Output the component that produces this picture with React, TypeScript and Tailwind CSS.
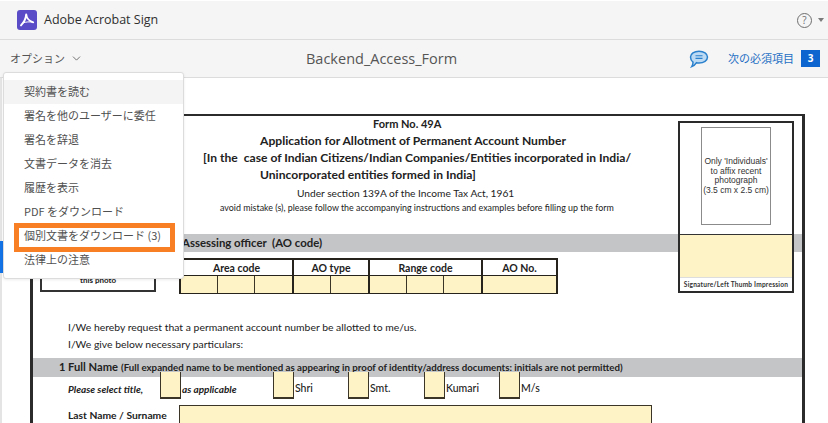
import { ChevronDown } from 'lucide-react';

const menuItems = [
  '契約書を読む',
  '署名を他のユーザーに委任',
  '署名を辞退',
  '文書データを消去',
  '履歴を表示',
  'PDF をダウンロード',
  '個別文書をダウンロード (3)',
  '法律上の注意',
];

const titleBoxes = [
  { label: 'Shri', width: 'w-[75px]' },
  { label: 'Smt.', width: 'w-[76px]' },
  { label: 'Kumari', width: 'w-[75px]' },
  { label: 'M/s', width: 'w-[40px]' },
];

function AcrobatLogo() {
  return (
    <svg width="20" height="20" viewBox="0 0 20 20" className="shrink-0">
      <rect width="20" height="20" rx="3" fill="#5a4bc6" />
      <path
        d="M9.200 4.400C9 7.500 7.200 12 4 15.400M9.200 4.400c.3 3.300 3 6.900 7 7.900"
        fill="none"
        stroke="#fff"
        strokeWidth="1.900"
        strokeLinecap="round"
        strokeLinejoin="round"
      />
      <path d="M6 12.900c3-1.100 6.600-1.400 10.200-.6" fill="none" stroke="#fff" strokeWidth="1" strokeLinecap="round" />
    </svg>
  );
}

function ChatIcon() {
  return (
    <svg width="20" height="18" viewBox="0 0 20 18">
      <path
        d="M10 1.200c4.800 0 8.500 2.500 8.500 5.900S14.800 13 10 13c-.9 0-1.700-.1-2.500-.3C6.300 14.600 4.800 16 2.800 16.600c.8-1.100 1.200-2.400 1.200-4.400C2.400 11 1.500 9.300 1.500 7.100c0-3.400 3.700-5.900 8.500-5.900z"
        fill="#bcdaf3"
        stroke="#2a80cc"
        strokeWidth="1.500"
      />
      <path d="M6.500 5.800h7M6.500 8.400h7" stroke="#2a80cc" strokeWidth="1.100" />
    </svg>
  );
}

function OptionsMenu() {
  return (
    <div className="absolute left-[3px] top-[72px] z-10 h-[207px] w-[181px] rounded-[3px] border border-[#dcdcdc] bg-white py-[7px] shadow-[0_1px_3px_rgba(0,0,0,0.08)]">
      {menuItems.map((item, i) => (
        <div
          key={item}
          className={`h-[24px] pl-[20px] text-[11px] leading-[23px] text-[#505050] ${i === 0 ? 'bg-[#f4f4f4]' : ''}`}
        >
          {item}
        </div>
      ))}
      <div className="absolute left-[10px] top-[150px] h-[29px] w-[161px] border-[5px] border-[#f97f25]" />
    </div>
  );
}

function CodeCells({ count, widthClass }: { count: number; widthClass: string }) {
  return (
    <div className="flex h-[17px] bg-[#fdf3c6]">
      {Array.from({ length: count }, (_, i) => (
        <div key={i} className={`${widthClass} h-full border-r border-[#3a3526] last:border-r-0`} />
      ))}
    </div>
  );
}

function CodeColumn({ label, count, widthClass, boxClass }: { label: string; count: number; widthClass: string; boxClass: string }) {
  return (
    <div className={`${boxClass} border-r-2 border-[#26231c] last:border-r-0`}>
      <div className="h-[16px] border-b border-[#26231c] text-center text-[10.500px] font-bold leading-[16px] text-[#222]">{label}</div>
      <CodeCells count={count} widthClass={widthClass} />
    </div>
  );
}

function PhotoPanel() {
  return (
    <div className="absolute left-[645px] top-[5px] z-[1] flex h-[172px] w-[116px] flex-col border-2 border-[#2a2a2a] bg-white">
      <div className="h-[111px] pt-[4px]">
        <div className="mx-auto flex h-[98px] w-[70px] items-center justify-center border border-[#8b8b8b] text-center font-['Liberation_Sans',sans-serif] text-[8.500px] leading-[9.500px] text-[#333]">
          <span>
            Only 'Individuals'
            <br />
            to affix recent
            <br />
            photograph
            <br />
            (3.5 cm x 2.5 cm)
          </span>
        </div>
      </div>
      <div className="h-[43px] border-t border-[#333] bg-[#fdf3c6]" />
      <div className="flex-1 border-t border-[#dddddd] text-center text-[6.600px] font-bold leading-[13px] tracking-[0.200px] text-[#333]">
        Signature/Left Thumb Impression
      </div>
    </div>
  );
}

export default function App() {
  return (
    <div className="relative h-[423px] w-[828px] overflow-hidden bg-white font-['Noto_Sans_CJK_JP',sans-serif]">
      <header className="mt-px flex h-[39px] items-center border-b border-[#dcdcdc] bg-[#f5f5f5] pl-[17px] pr-[4px]">
        <AcrobatLogo />
        <span className="ml-[7px] font-['Open_Sans',sans-serif] text-[12.500px] text-[#2f2f2f]">Adobe Acrobat Sign</span>
        <div className="ml-auto flex items-center gap-[6px]">
          <div className="flex h-[15px] w-[15px] items-center justify-center rounded-full border-[1.500px] border-[#6e6e6e] font-['Open_Sans',sans-serif] text-[10px] leading-none text-[#6e6e6e]">?</div>
          <div className="h-0 w-0 border-x-[3.500px] border-t-[4px] border-x-transparent border-t-[#7a7a7a]" />
        </div>
      </header>

      <div className="flex h-[38px] items-center border-b border-[#dcdcdc] bg-[#f5f5f5] pl-[10px] pr-[8px]">
        <span className="text-[11px] text-[#555]">オプション</span>
        <ChevronDown size={13} strokeWidth={1.700} className="ml-[5px] text-[#666]" />
        <span className="ml-[223px] font-['Open_Sans',sans-serif] text-[14.500px] text-[#555]">Backend_Access_Form</span>
        <div className="ml-auto flex items-center">
          <ChatIcon />
          <span className="ml-[19px] text-[11px] text-[#1f6fc4]">次の必須項目</span>
          <div className="ml-[7px] flex h-[17px] w-[19px] items-center justify-center bg-[#0d66d0] font-['Open_Sans',sans-serif] text-[10px] font-bold text-white">3</div>
        </div>
      </div>

      <OptionsMenu />
      <div className="absolute bottom-0 left-0 top-[78px] w-[2px] bg-[#e4e4e4]" />
      <div className="absolute left-0 top-[241px] h-[32px] w-[3px] bg-[#1473e6]" />

      <main className="pl-[30px] pt-[36px] font-['Lato',sans-serif] text-[#222]">
        <div className="relative h-[400px] w-[775px] border-x-[3px] border-t-2 border-[#2b2b2b]">
          <PhotoPanel />

          <div className="-mt-px text-[12.100px] font-bold leading-[17px]">
            <div className="pl-[340px] text-[11px]">Form No. 49A</div>
            <div className="pl-[227px]">Application for Allotment of Permanent Account Number</div>
            <div className="pl-[170px]">[In the&nbsp; case of Indian Citizens/Indian Companies/Entities incorporated in India/</div>
            <div className="pl-[227px]">Unincorporated entities formed in India]</div>
          </div>
          <div className="mt-[2px] pl-[264px] text-[10.200px] leading-[16px]">Under section 139A of the Income Tax Act, 1961</div>
          <div className="pl-[187px] text-[8.900px] leading-[13px]">avoid mistake (s), please follow the accompanying instructions and examples before filling up the form</div>

          <div className="mt-[20px] h-[18px] bg-[#c4c5c7] pl-[149px] text-[11.400px] font-bold leading-[18px]">Assessing officer&nbsp; (AO code)</div>

          <div className="mt-[6px] flex">
            <div className="ml-[7px] mt-[-16px] h-[50px] w-[116px] border-2 border-[#333] pt-[31px] text-center text-[8px] font-bold leading-[10px]">this photo</div>
            <div className="ml-[23px] flex h-[36px] w-[379px] border-2 border-[#26231c]">
              <CodeColumn label="Area code" count={3} widthClass="w-[37.300px]" boxClass="w-[113px]" />
              <CodeColumn label="AO type" count={2} widthClass="w-[37.500px]" boxClass="w-[76px]" />
              <CodeColumn label="Range code" count={3} widthClass="w-[37.300px]" boxClass="w-[113px]" />
              <CodeColumn label="AO No." count={1} widthClass="w-[73px]" boxClass="w-[73px]" />
            </div>
          </div>

          <div className="mt-[25px] pl-[35px] text-[10.400px] leading-[17px]">
            <div>I/We hereby request that a permanent account number be allotted to me/us.</div>
            <div>I/We give below necessary particulars:</div>
          </div>

          <div className="mt-[5px] flex h-[19px] items-center bg-[#c4c5c7] pl-[26px] font-bold">
            <span className="w-[9px] text-[11px]">1</span>
            <span className="text-[11.200px]">Full Name</span>
            <span className="ml-[3px] text-[9.700px]">(Full expanded name to be mentioned as appearing in proof of identity/address documents: initials are not permitted)</span>
          </div>

          <div className="-mt-[5px] flex h-[27px] text-[10px] font-bold">
            <div className="w-[127px] self-end pb-[2px] pl-[35px] italic">Please select title,</div>
            <div className="h-full w-[21px] border-x border-b-2 border-[#3a3526] bg-[#fdf3c6]" />
            <div className="w-[92px] self-end pb-[2px] pl-px italic">as applicable</div>
            {titleBoxes.map((box) => (
              <div key={box.label} className={`flex ${box.width}`}>
                <div className="h-full w-[21px] shrink-0 border-x border-b-2 border-[#3a3526] bg-[#fdf3c6]" />
                <span className="self-end pb-[2px] pl-px text-[10.500px] font-medium">{box.label}</span>
              </div>
            ))}
          </div>

          <div className="mt-[6px] flex">
            <div className="w-[146px] pl-[35px] pt-[2px] text-[10.300px] font-bold leading-[16px]">Last Name / Surname</div>
            <div className="h-[18px] w-[473px] border-x border-t border-[#3a3526] bg-[#fdf3c6]" />
          </div>
        </div>
      </main>
    </div>
  );
}
